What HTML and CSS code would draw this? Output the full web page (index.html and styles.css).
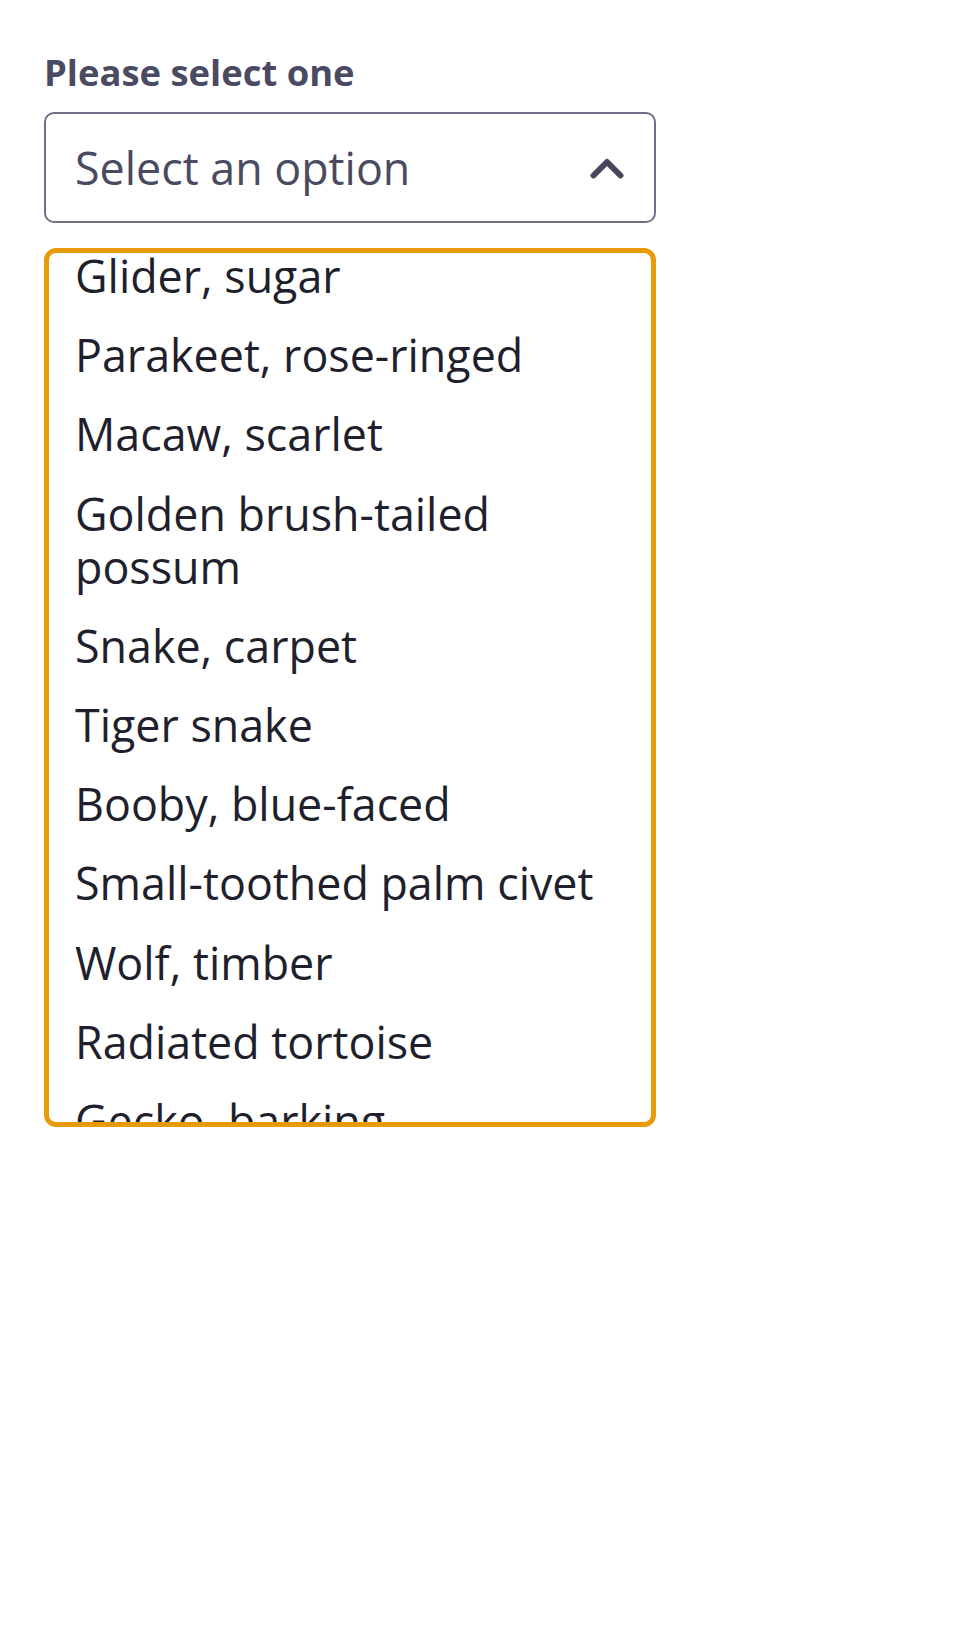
FILE: index.html
```html
<!DOCTYPE html>
<html lang="en">
<head>
<meta charset="utf-8">
<title>Select</title>
<link rel="stylesheet" href="styles.css">
</head>
<body>
<div class="field">
  <div class="label" id="lbl">Please select one</div>
  <div class="select" role="combobox" aria-expanded="true" aria-labelledby="lbl">
    <span class="select-value">Select an option</span>
    <svg class="chevron" width="34" height="22" viewBox="0 0 34 22" aria-hidden="true">
      <path d="M3.5 18.5 L17 5 L30.5 18.5" fill="none" stroke="#46465c" stroke-width="6" stroke-linecap="round" stroke-linejoin="round"/>
    </svg>
  </div>
  <div class="listbox" role="listbox">
    <ul class="options">
      <li>Glider, sugar</li>
      <li>Parakeet, rose-ringed</li>
      <li>Macaw, scarlet</li>
      <li>Golden brush-tailed possum</li>
      <li>Snake, carpet</li>
      <li>Tiger snake</li>
      <li>Booby, blue-faced</li>
      <li>Small-toothed palm civet</li>
      <li>Wolf, timber</li>
      <li>Radiated tortoise</li>
      <li>Gecko, barking</li>
      <li>Lemur, ring-tailed</li>
    </ul>
  </div>
</div>
</body>
</html>
```

FILE: styles.css
```css
html, body {
  margin: 0;
  padding: 0;
  background: #ffffff;
}

body {
  font-family: "Open Sans", "Noto Sans", sans-serif;
}

.field {
  width: 612px;
  padding: 51px 0 0 44px;
}

.label {
  font-size: 36.4px;
  font-weight: 700;
  line-height: 42px;
  color: #4a4a62;
  margin-bottom: 19px;
}

.select {
  box-sizing: border-box;
  height: 111px;
  border: 2px solid #6f6f89;
  border-radius: 10px;
  display: flex;
  align-items: center;
  justify-content: space-between;
  padding: 0 30px 0 29px;
}

.select-value {
  font-size: 44.8px;
  color: #4a4a60;
}

.chevron {
  display: block;
  flex: none;
}

.listbox {
  box-sizing: border-box;
  margin-top: 25px;
  height: 879px;
  border: 5px solid #e89b07;
  border-radius: 12px;
  overflow: hidden;
  background: #ffffff;
}

.options {
  list-style: none;
  margin: -17px 0 0;
  padding: 0;
}

.options li {
  font-size: 44.8px;
  line-height: 53px;
  color: #1f1f2d;
  padding: 13.1px 26px 13.1px 26px;
}
```
